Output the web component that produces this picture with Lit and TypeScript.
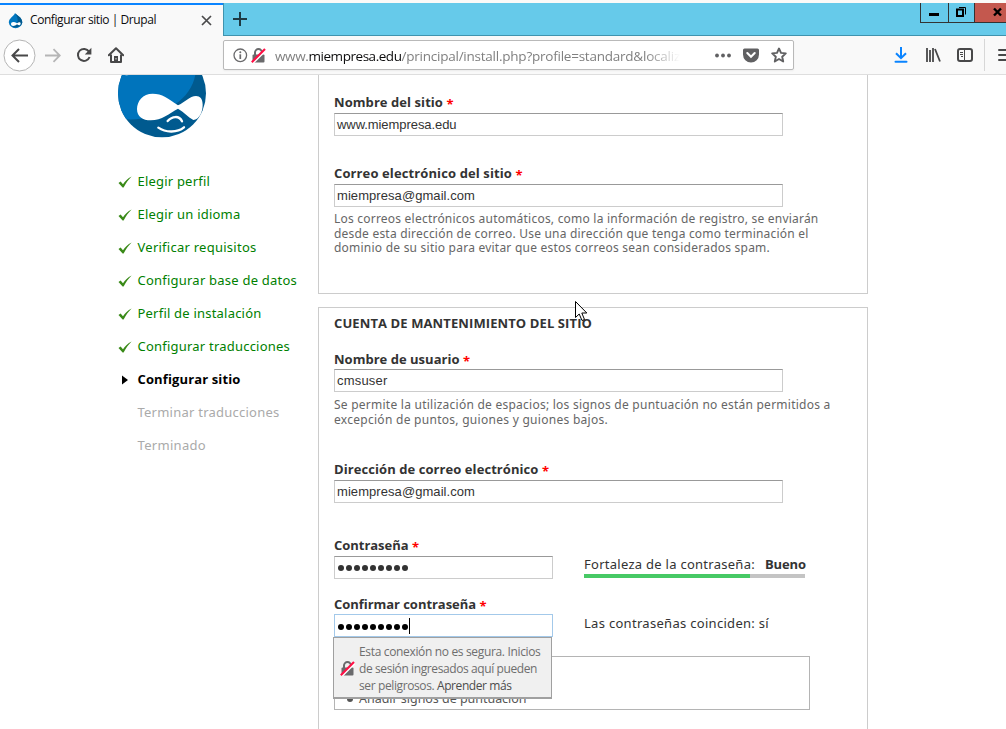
import { LitElement, html, css, svg } from "lit";
import { customElement, property } from "lit/decorators.js";

/** Inline text tracked so that it fills a given width. */
@customElement("fit-text")
class FitText extends LitElement {
  @property({ type: Number }) w = 0;

  static styles = css`
    :host {
      display: inline-block;
      white-space: pre;
    }
  `;

  firstUpdated() {
    const count = (this.textContent ?? "").length;
    if (!this.w || !count) return;
    const natural = this.getBoundingClientRect().width;
    this.style.letterSpacing = `${(this.w - natural) / count}px`;
  }

  render() {
    return html`<slot></slot>`;
  }
}

const lock = html`<svg class="lock" viewBox="0 0 15 15" width="15" height="15">
  <path d="M4 7V4.6a3.5 3.5 0 0 1 7 0V7" fill="none" stroke="#6a6a6c" stroke-width="2" />
  <rect x="1.5" y="6.5" width="12" height="8" rx="1" fill="#6a6a6c" />
  <path d="M-0.4 13.4L12.6 0.4" stroke="#fff" stroke-width="2" transform="translate(2 2)" />
  <path d="M0.8 14.2L14 1" stroke="#ff0f45" stroke-width="2.1" />
</svg>`;

const check = svg`<path d="M0.5 7L2.6 5.6L5 8.2C7 5 9.8 2.2 13.6 0.4C10.4 3.6 7.8 7 5.6 11.6L4.6 11.4Z" fill="#3a8a18"/>`;

@customElement("browser-chrome")
class BrowserChrome extends LitElement {
  static styles = css`
    :host {
      display: block;
      height: 75px;
      font-family: "Open Sans", "Noto Sans", sans-serif;
    }
    svg {
      display: block;
      flex: none;
    }
    .tabs {
      box-sizing: border-box;
      height: 36px;
      padding-top: 3px;
      background: #fbfaf8;
      display: flex;
    }
    .tab {
      box-sizing: border-box;
      width: 223px;
      flex: none;
      height: 33px;
      border-top: 2px solid #0a84ff;
      background: #f9f9f9;
      display: flex;
      align-items: center;
      padding-left: 8px;
      font-size: 12px;
      line-height: 16px;
      color: #0c0c0d;
    }
    .title {
      width: 171px;
      margin-left: 7px;
      margin-top: -1px;
    }
    .strip {
      flex: 1;
      box-sizing: border-box;
      height: 33px;
      background: #66caea;
      border-left: 1px solid #3f93ae;
      border-bottom: 1px solid #3f93ae;
      display: flex;
      justify-content: space-between;
      padding-left: 9px;
    }
    .plus {
      margin-top: 9px;
    }
    .win {
      display: flex;
      height: 20px;
      box-sizing: border-box;
      border: solid #333;
      border-width: 0 0 1px 1px;
    }
    .win > div {
      box-sizing: border-box;
      border-right: 1px solid #333;
      height: 19px;
    }
    .min {
      width: 28px;
    }
    .max {
      width: 26px;
    }
    .win .close {
      width: 31px;
      background: #c4584e;
      border-right: 0;
    }
    .bar {
      box-sizing: border-box;
      height: 39px;
      background: #f9f9f9;
      border-bottom: 1px solid #dedede;
      display: flex;
      padding-left: 3px;
      overflow: hidden;
    }
    .nav {
      width: 220px;
      flex: none;
      display: flex;
      align-items: center;
    }
    .fwd {
      margin-left: 9px;
    }
    .reload {
      margin-left: 15px;
    }
    .home {
      margin-left: 16px;
    }
    .url {
      box-sizing: border-box;
      width: 571px;
      flex: none;
      height: 30px;
      margin-top: 4px;
      border: 1px solid #b9b9b9;
      border-radius: 2px;
      background: #fff;
      display: flex;
      align-items: center;
      padding-left: 9px;
      box-shadow: 0 1px 2px rgba(0, 0, 0, 0.06);
    }
    .url .lock {
      margin-left: 3px;
    }
    .address {
      width: 405px;
      flex: none;
      margin-left: 9px;
      overflow: hidden;
      white-space: nowrap;
      font-size: 13.5px;
      line-height: 20px;
      padding-top: 2px;
      color: #808080;
      -webkit-mask-image: linear-gradient(90deg, #000 370px, transparent 405px);
      mask-image: linear-gradient(90deg, #000 370px, transparent 405px);
    }
    .address b {
      font-weight: 400;
      color: #0c0c0d;
    }
    .dots {
      margin-left: 34px;
    }
    .pocket,
    .star {
      margin-left: 12px;
    }
    .tools {
      flex: none;
      display: flex;
      align-items: center;
      padding-left: 99px;
    }
    .lib {
      margin-left: 16px;
    }
    .side {
      margin-left: 16px;
    }
    .sep {
      width: 1px;
      height: 32px;
      background: #d7d7d7;
      margin: 0 13px 0 11px;
      flex: none;
    }
  `;

  render() {
    return html`
      <div class="tabs">
        <div class="tab">
          <svg width="15" height="16" viewBox="0 0 15 16">
            <path d="M7 0C8 2 14.3 4 14.3 9.4A6.8 6.6 0 0 1 .8 9.4C.8 5 6 3.500 7 0Z" fill="#0077c0" />
            <path d="M7 0C8 2 14.300 4 14.300 9.400C13 14 8 15 4 14C11 11 11 6 7 0Z" fill="#00598e" />
            <path d="M3 11.300C3 8.500 6 8.400 9 10.300C11 8.700 13 9 12.600 11C12 13 10.500 12.300 9 11.300C7 13 3.500 14 3 11.300Z" fill="#fff" />
          </svg>
          <div class="title"><fit-text w="126">Configurar sitio | Drupal</fit-text></div>
          <svg width="11" height="11" viewBox="0 0 11 11">
            <path d="M1 1L10 10M10 1L1 10" stroke="#4a4a4b" stroke-width="1.700" />
          </svg>
        </div>
        <div class="strip">
          <svg class="plus" width="14" height="14" viewBox="0 0 14 14">
            <path d="M7 0V14M0 7H14" stroke="#1d3a44" stroke-width="2" />
          </svg>
          <div class="win">
            <div class="min">
              <svg width="27" height="19"><path d="M8 10h10v3h-10z" fill="#000" /></svg>
            </div>
            <div class="max">
              <svg width="25" height="19">
                <path d="M8 6.500h6v6.500h-6z" fill="none" stroke="#000" stroke-width="2" />
                <path d="M10 4.500h6.500v7" fill="none" stroke="#000" />
              </svg>
            </div>
            <div class="close">
              <svg width="31" height="19">
                <path d="M19 5.500L26 12.500M26 5.500L19 12.500" stroke="#000" stroke-width="2.400" />
              </svg>
            </div>
          </div>
        </div>
      </div>
      <div class="bar">
        <div class="nav">
          <svg width="33" height="33" viewBox="0 0 33 33">
            <circle cx="16.500" cy="16.500" r="15.500" fill="#fff" stroke="#b4b4b4" />
            <path d="M25 16.500H10M16 10L9.500 16.500L16 23" fill="none" stroke="#484849" stroke-width="2" />
          </svg>
          <svg class="fwd" width="16" height="15" viewBox="0 0 16 15">
            <path d="M0 7.500H14M8.500 1.200L14.800 7.500L8.500 13.800" fill="none" stroke="#b5b5b6" stroke-width="1.800" />
          </svg>
          <svg class="reload" width="16" height="16" viewBox="0 0 16 16">
            <path d="M13 4.600A6 6 0 1 0 13.600 10" fill="none" stroke="#484849" stroke-width="2" />
            <path d="M15.400 0.800V7.400H8.800Z" fill="#484849" />
          </svg>
          <svg class="home" width="16" height="16" viewBox="0 0 16 16">
            <path d="M0.800 8.200L8 1.200L15.200 8.200" fill="none" stroke="#484849" stroke-width="2" stroke-linejoin="round" stroke-linecap="round" />
            <path d="M3 7.500V14.900H13V7.500" fill="none" stroke="#484849" stroke-width="2" stroke-linejoin="round" />
            <path d="M6 9h4v6H6z" fill="#484849" /><path d="M7.500 11h1v1.500h-1z" fill="#ddd" />
          </svg>
        </div>
        <div class="url">
          <svg width="15" height="15" viewBox="0 0 15 15">
            <circle cx="7.300" cy="7.300" r="6.300" fill="none" stroke="#6a6a6c" stroke-width="1.300" />
            <path d="M7.300 6.300V11" stroke="#6a6a6c" stroke-width="1.700" />
            <circle cx="7.300" cy="4.200" r="1" fill="#6a6a6c" />
          </svg>
          ${lock}
          <div class="address"><fit-text w="33.500">www.</fit-text><b><fit-text w="93">miempresa.edu</fit-text></b><fit-text w="278.500">/principal/install.php?profile=standard&amp;localiz</fit-text></div>
          <svg class="dots" width="17" height="5" viewBox="0 0 17 5">
            <g fill="#606062"><circle cx="3" cy="2.500" r="1.900" /><circle cx="9" cy="2.500" r="1.900" /><circle cx="15" cy="2.500" r="1.900" /></g>
          </svg>
          <svg class="pocket" width="16" height="15" viewBox="0 0 16 15">
            <path d="M1.500 0.500H14.500A1.500 1.500 0 0 1 16 2V6.500A8 8 0 0 1 0 6.500V2A1.500 1.500 0 0 1 1.500 0.500Z" fill="#606062" />
            <path d="M4.300 5L8 8.700L11.700 5" fill="none" stroke="#fff" stroke-width="2.100" stroke-linecap="round" />
          </svg>
          <svg class="star" width="16" height="16" viewBox="0 0 16 16">
            <path d="M8 1.500L10 5.900L14.800 6.400L11.200 9.700L12.200 14.500L8 12L3.800 14.500L4.800 9.700L1.200 6.400L6 5.900Z" fill="none" stroke="#606062" stroke-width="1.900" stroke-linejoin="round" />
          </svg>
        </div>
        <div class="tools">
          <svg width="16" height="16" viewBox="0 0 16 16">
            <path d="M8 0V11M3 6.200L8 11.200L13 6.200" fill="none" stroke="#0a84ff" stroke-width="2" />
            <path d="M2.500 14.800H13.500" stroke="#0a84ff" stroke-width="2" stroke-linecap="round" />
          </svg>
          <svg class="lib" width="16" height="16" viewBox="0 0 16 16">
            <path d="M2 1V15M5 3V15M8 1V15M10 2L15 14.500" fill="none" stroke="#484849" stroke-width="1.800" />
          </svg>
          <svg class="side" width="16" height="16" viewBox="0 0 16 16">
            <rect x="1" y="2" width="14" height="12" rx="2" fill="none" stroke="#484849" stroke-width="2" />
            <path d="M7.500 2V14" stroke="#484849" /><path d="M3 5.500H6M3 7.500H6M4 9.500H6" stroke="#484849" />
          </svg>
          <div class="sep"></div>
          <svg width="16" height="16" viewBox="0 0 16 16">
            <path d="M1 3H15M1 8H15M1 13H15" stroke="#484849" stroke-width="2" stroke-linecap="round" />
          </svg>
        </div>
      </div>
    `;
  }
}

type Step = { text: string; w: number; state: "done" | "active" | "todo" };

const steps: Step[] = [
  { text: "Elegir perfil", w: 72.5, state: "done" },
  { text: "Elegir un idioma", w: 103, state: "done" },
  { text: "Verificar requisitos", w: 119, state: "done" },
  { text: "Configurar base de datos", w: 159.5, state: "done" },
  { text: "Perfil de instalación", w: 124, state: "done" },
  { text: "Configurar traducciones", w: 152.5, state: "done" },
  { text: "Configurar sitio", w: 103, state: "active" },
  { text: "Terminar traducciones", w: 142, state: "todo" },
  { text: "Terminado", w: 68.5, state: "todo" },
];

@customElement("app-root")
class AppRoot extends LitElement {
  static styles = css`
    :host {
      display: block;
      position: relative;
      width: 1006px;
      height: 729px;
      overflow: hidden;
      background: #fff;
      font-family: "Noto Sans", "Open Sans", sans-serif;
      font-size: 13px;
      line-height: 16px;
      color: #333;
    }
    svg {
      display: block;
      flex: none;
    }
    .page {
      display: flex;
      height: 654px;
      overflow: hidden;
    }
    .sidebar {
      width: 200px;
      padding-left: 118px;
      flex: none;
    }
    .steps {
      margin-top: 35px;
      display: flex;
      flex-direction: column;
      gap: 17px;
    }
    .step {
      height: 16px;
      display: flex;
      align-items: center;
      gap: 4.5px;
      white-space: nowrap;
    }
    .step svg {
      margin-top: 1px;
    }
    .done {
      color: #008000;
    }
    .active {
      color: #000;
      font-family: "Open Sans", sans-serif;
      font-weight: 700;
    }
    .todo {
      color: #aaa;
    }
    .main {
      width: 550px;
      flex: none;
      display: flex;
      flex-direction: column;
      gap: 13px;
    }
    .panel {
      box-sizing: border-box;
      border: 1px solid #ccc;
      padding: 0 15px;
      flex: none;
    }
    .first {
      height: 219px;
      border-top: 0;
      padding-top: 19px;
    }
    .second {
      height: 500px;
      padding-top: 7px;
    }
    .label {
      height: 16px;
      font-family: "Open Sans", sans-serif;
      font-weight: 700;
      white-space: nowrap;
    }
    .label i {
      color: #f00;
      font-style: normal;
      margin-left: 3.5px;
      font-size: 13px;
      line-height: 10px;
      vertical-align: -2px;
    }
    .input {
      box-sizing: border-box;
      width: 449px;
      height: 23px;
      margin-top: 3px;
      border: 1px solid #ccc;
      border-top-color: #999;
      padding: 2px 0 0 2px;
      font-family: "Liberation Sans", Arial, sans-serif;
      font-size: 13px;
      line-height: 17px;
      display: flex;
    }
    .gap29 {
      margin-top: 29px;
    }
    .desc {
      margin-top: 5px;
      font-size: 12px;
      line-height: 14.5px;
      height: 43.5px;
      color: #666;
      display: flex;
      flex-direction: column;
      align-items: flex-start;
    }
    .desc.two {
      height: 29px;
      margin-top: 6px;
      margin-bottom: 34px;
    }
    .user {
      margin-top: 20px;
    }
    .user + .input {
      margin-top: 2px;
    }
    .pass {
      display: grid;
      grid-template-columns: 250px 222px;
      margin-top: 34px;
    }
    .pass + .pass {
      margin-top: 17px;
    }
    .pass .input {
      width: 219px;
    }
    .strength {
      padding-top: 19px;
    }
    .row {
      display: flex;
      gap: 10px;
      white-space: nowrap;
    }
    .row b {
      font-family: "Open Sans", sans-serif;
    }
    .meter {
      width: 221px;
      height: 4px;
      margin-top: 2px;
      background: #c4c4c4;
    }
    .fill {
      height: 4px;
      background: #47c965;
    }
    .match {
      padding-top: 19px;
      white-space: nowrap;
    }
    .pass .focus {
      margin-top: 2px;
      border-color: #a3c9ea;
      color: #000;
      position: relative;
      padding-top: 3px;
    }
    .popup {
      position: absolute;
      z-index: 1;
      box-sizing: border-box;
      left: -2px;
      top: 22px;
      width: 219px;
      height: 62px;
      border: 1px solid #a0a0a0;
      border-bottom-width: 2px;
      background: #f0f0f0;
      color: #6e6e6e;
      display: flex;
      align-items: center;
      gap: 4px;
      padding: 1px 0 0 6px;
      font-family: "Open Sans", sans-serif;
      font-size: 12px;
      line-height: 17px;
    }
    .popup b {
      font-weight: 400;
      color: #4c4c4c;
    }
    .lines {
      display: flex;
      flex-direction: column;
      align-items: flex-start;
      white-space: nowrap;
    }
    .tips {
      box-sizing: border-box;
      width: 476px;
      height: 54px;
      margin-top: 19px;
      border: 1px solid #b4b4b4;
      padding: 31px 0 0 12px;
      display: flex;
      gap: 6px;
      align-items: center;
      font-size: 12.5px;
      line-height: 17px;
      color: #555;
    }
    .bullet {
      width: 6px;
      height: 6px;
      border-radius: 50%;
      background: #555;
    }
    .pointer {
      position: absolute;
      left: 575px;
      top: 301px;
    }
  `;

  marker(state: Step["state"]) {
    return html`<svg width="15" height="12" viewBox="0 0 15 12">
      ${state === "done" ? check : state === "active" ? svg`<path d="M4 1.500L10 6L4 10.500Z" fill="#000"/>` : null}
    </svg>`;
  }

  label(text: string, w: number, cls = "") {
    return html`<div class="label ${cls}"><fit-text w=${w}>${text}</fit-text><i>*</i></div>`;
  }

  bullets(color: string, caret = false) {
    return html`<svg width="80" height="17" viewBox="0 0 80 17">
      ${Array.from({ length: 9 }, (_, i) => svg`<circle cx=${4 + i * 8} cy="9" r="3" fill=${color}/>`)}
      ${caret ? svg`<path d="M72.500 0V16" stroke="#000"/>` : null}
    </svg>`;
  }

  render() {
    return html`
      <browser-chrome></browser-chrome>
      <div class="page">
        <div class="sidebar">
          <svg width="88" height="63" viewBox="54 15 264 189">
            <defs><clipPath id="drop"><ellipse cx="186" cy="70" rx="132" ry="132" /></clipPath></defs>
            <g clip-path="url(#drop)">
              <rect x="54" y="0" width="264" height="204" fill="#005a8f" />
              <path d="M54 0H288C284 44 262 78 224 104C180 140 110 156 54 145Z" fill="#0074bc" />
              <path d="M74 15Q82 19 94 11L90 5H70Z" fill="#8fc4e6" />
            </g>
            <path d="M234 106C205 85 186 71 158 71C128 71 111 94 111 117C111 140 128 151 152 151C186 151 208 130 234 116C252 126 263 141 280 150C298 148 308 126 308 104C308 86 300 78 288 78C270 78 252 98 234 106Z" fill="#fff" />
            <path d="M203 153C216 138 238 136 246 154" fill="none" stroke="#fff" stroke-width="7" stroke-linecap="round" />
            <path d="M175 173C198 189 232 188 252 172" fill="none" stroke="#fff" stroke-width="7" stroke-linecap="round" />
          </svg>
          <div class="steps">
            ${steps.map((s) => html`<div class="step ${s.state}">${this.marker(s.state)}<fit-text w=${s.w}>${s.text}</fit-text></div>`)}
          </div>
        </div>
        <div class="main">
          <div class="panel first">
            ${this.label("Nombre del sitio", 109)}
            <div class="input"><fit-text w="119.500">www.miempresa.edu</fit-text></div>
            ${this.label("Correo electrónico del sitio", 178, "gap29")}
            <div class="input"><fit-text w="138">miempresa@gmail.com</fit-text></div>
            <div class="desc">
              <fit-text w="484.500">Los correos electrónicos automáticos, como la información de registro, se enviarán</fit-text>
              <fit-text w="474.500">desde esta dirección de correo. Use una dirección que tenga como terminación el</fit-text>
              <fit-text w="436">dominio de su sitio para evitar que estos correos sean considerados spam.</fit-text>
            </div>
          </div>
          <div class="panel second">
            <div class="label"><fit-text w="258">CUENTA DE MANTENIMIENTO DEL SITIO</fit-text></div>
            ${this.label("Nombre de usuario", 125.5, "user")}
            <div class="input"><fit-text w="50.500">cmsuser</fit-text></div>
            <div class="desc two">
              <fit-text w="496.500">Se permite la utilización de espacios; los signos de puntuación no están permitidos a</fit-text>
              <fit-text w="274">excepción de puntos, guiones y guiones bajos.</fit-text>
            </div>
            ${this.label("Dirección de correo electrónico", 204.5, "mail")}
            <div class="input"><fit-text w="138">miempresa@gmail.com</fit-text></div>
            <div class="pass">
              <div>
                ${this.label("Contraseña", 74.5)}
                <div class="input">${this.bullets("#333")}</div>
              </div>
              <div class="strength">
                <div class="row"><fit-text w="171">Fortaleza de la contraseña:</fit-text><b><fit-text w="41">Bueno</fit-text></b></div>
                <div class="meter"><div class="fill" style="width:75%"></div></div>
              </div>
            </div>
            <div class="pass">
              <div>
                ${this.label("Confirmar contraseña", 142)}
                <div class="input focus">
                  ${this.bullets("#000", true)}
                  <div class="popup">
                    ${lock}
                    <div class="lines">
                      <fit-text w="181.500">Esta conexión no es segura. Inicios</fit-text>
                      <fit-text w="178">de sesión ingresados aquí pueden</fit-text>
                      <div><fit-text w="78">ser peligrosos. </fit-text><b><fit-text w="74.500">Aprender más</fit-text></b></div>
                    </div>
                  </div>
                </div>
              </div>
              <div class="match"><fit-text w="185">Las contraseñas coinciden: sí</fit-text></div>
            </div>
            <div class="tips"><span class="bullet"></span><fit-text w="167.500">Añadir signos de puntuación</fit-text></div>
          </div>
        </div>
      </div>
      <svg class="pointer" width="13" height="21" viewBox="0 0 13 21">
        <path d="M0.500 0.500V16.500L4.200 13L7 19.500L9.500 18.500L6.800 12H11.800Z" fill="#fff" stroke="#000" />
      </svg>
    `;
  }
}
